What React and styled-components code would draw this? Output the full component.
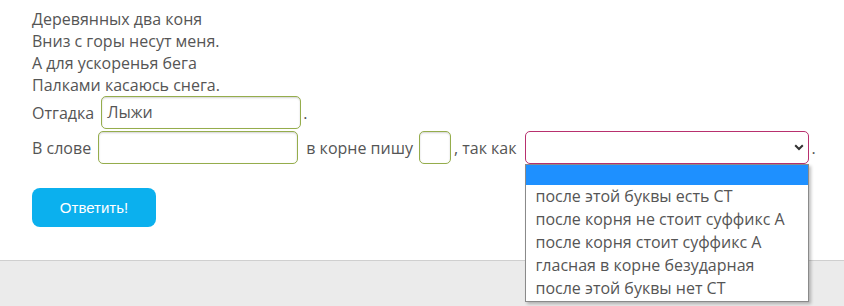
import React from "react";
import styled, { createGlobalStyle } from "styled-components";

const Global = createGlobalStyle`
  html, body { margin: 0; padding: 0; background: #fff; }
  body { font-family: "Open Sans", "Noto Sans", sans-serif; color: #555; }
`;

const Page = styled.div`
  display: flex;
  flex-direction: column;
  min-height: 306px;
`;

const Content = styled.div`
  padding: 8px 0 0 32px;
  font-size: 16px;
  height: 260px;
  box-sizing: border-box;
`;

const Line = styled.div`
  line-height: 22px;
  height: 22px;
`;

const Row = styled.div`
  display: flex;
  align-items: center;
  height: 33px;
  margin-top: ${(p) => p.$mt || 0}px;
  white-space: pre;
`;

const TextInput = styled.div`
  box-sizing: border-box;
  width: ${(p) => p.$w}px;
  height: 33px;
  margin: 0 ${(p) => p.$mr ?? 5}px 0 ${(p) => p.$ml ?? 8}px;
  border: 1px solid #95ad4c;
  border-radius: 5px;
  box-shadow: inset 0 1px 2px rgba(0, 0, 0, 0.18);
  padding: 0 5px;
  line-height: 31px;
  color: #555;
`;

const SelectWrap = styled.div`
  position: relative;
  margin: 0 2px 0 9px;
`;

const SelectBox = styled.div`
  box-sizing: border-box;
  width: 284px;
  height: 33px;
  border: 1px solid #b8306e;
  border-radius: 5px;
  display: flex;
  align-items: center;
  justify-content: flex-end;
  padding-right: 4px;
`;

const Dropdown = styled.ul`
  position: absolute;
  left: 0;
  top: 33px;
  width: 284px;
  box-sizing: border-box;
  margin: 0;
  padding: 0 0 1px;
  list-style: none;
  background: #fff;
  border: 1px solid #8a8a8a;
  box-shadow: 2px 2px 3px rgba(0, 0, 0, 0.25);
  z-index: 5;
`;

const Option = styled.li`
  height: ${(p) => (p.$blank ? 20 : 23)}px;
  line-height: 23px;
  padding-left: 9px;
  font-size: 16px;
  color: #555;
  background: ${(p) => (p.$active ? "#1e90ff" : "#fff")};
`;

const Button = styled.button`
  margin-top: 24px;
  width: 124px;
  height: 39px;
  border: none;
  border-radius: 8px;
  background: #0bb0ee;
  color: #fff;
  font-family: "Liberation Sans", Arial, sans-serif;
  font-size: 15px;
  padding: 0;
`;

const Footer = styled.div`
  flex: 1;
  background: #ebebeb;
  border-top: 1px solid #cfcfcf;
`;

const Chevron = () => (
  <svg width="10" height="7" viewBox="0 0 10 7">
    <path d="M1.2 1.2 L5 5 L8.8 1.2" fill="none" stroke="#333" strokeWidth="2" />
  </svg>
);

const options = [
  "после этой буквы есть СТ",
  "после корня не стоит суффикс А",
  "после корня стоит суффикс А",
  "гласная в корне безударная",
  "после этой буквы нет СТ",
];

export default function App() {
  return (
    <Page>
      <Global />
      <Content>
        <Line>Деревянных два коня</Line>
        <Line>Вниз с горы несут меня.</Line>
        <Line>А для ускоренья бега</Line>
        <Line>Палками касаюсь снега.</Line>
        <Row>
          Отгадка
          <TextInput $w={200} $ml={7} $mr={2}>Лыжи</TextInput>.
        </Row>
        <Row $mt={2}>
          В слове
          <TextInput $w={200} $ml={7} $mr={4}></TextInput>
          {" в корне пишу"}
          <TextInput $w={32} $ml={6} $mr={3}></TextInput>
          , так как
          <SelectWrap>
            <SelectBox>
              <Chevron />
            </SelectBox>
            <Dropdown>
              <Option $blank $active />
              {options.map((o) => (
                <Option key={o}>{o}</Option>
              ))}
            </Dropdown>
          </SelectWrap>
          .
        </Row>
        <Button>Ответить!</Button>
      </Content>
      <Footer />
    </Page>
  );
}
